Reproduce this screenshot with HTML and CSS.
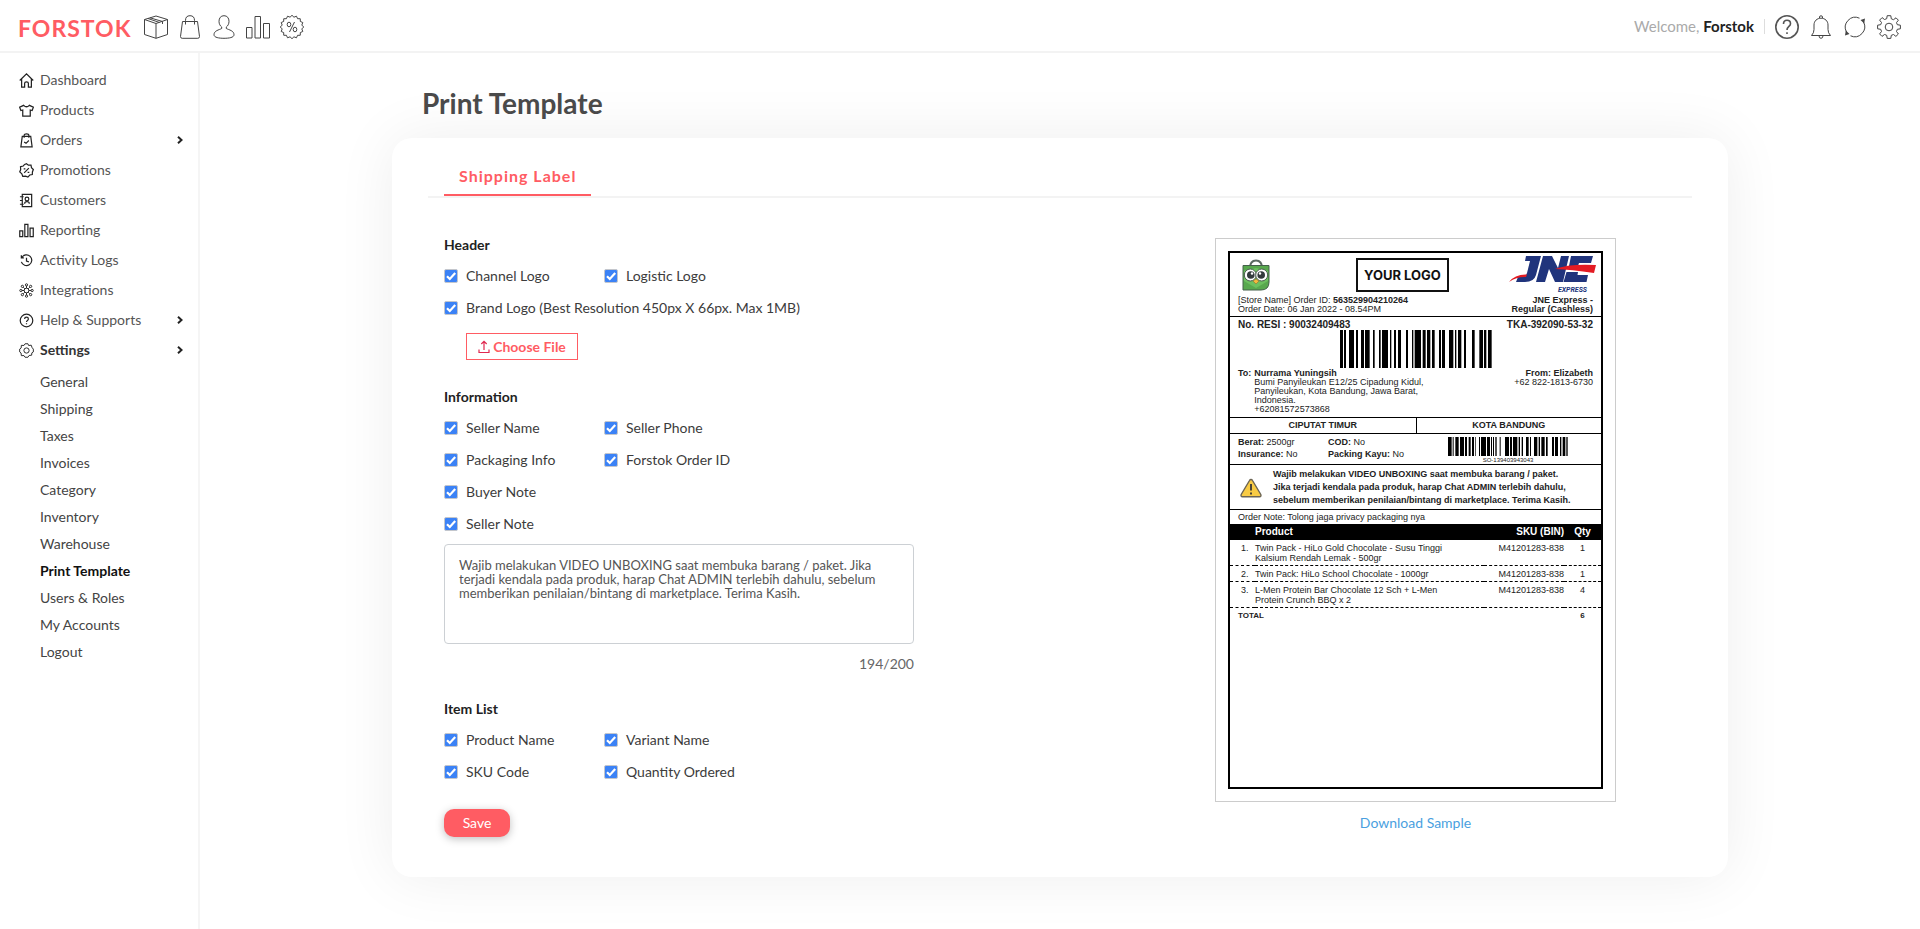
FILE: index.html
```html
<!DOCTYPE html>
<html lang="en">
<head>
<meta charset="utf-8">
<title>Print Template - Forstok</title>
<link rel="stylesheet" href="styles.css">
</head>
<body>
<header class="topbar">
  <a class="brand" href="#">FORSTOK</a>
  <nav class="quick" aria-label="Shortcuts">
    <a href="#" aria-label="Products"><svg viewBox="0 0 24 24"><path d="M12 1L23.500 4.500V19.500L12 23.300L.5 19.500V4.500ZM.5 4.500L12 8.500L23.500 4.500M12 8.500V23.300M6 2.800L18.500 6.500V9M4 3.500L15.500 7.500"/></svg></a>
    <a href="#" aria-label="Orders"><svg viewBox="0 0 24 24"><path d="M4.500 6.500H19.500L21.500 21.500Q21.500 23.300 19.800 23.300H4.200Q2.500 23.300 2.500 21.500ZM7.500 9.500V5.500Q7.500.7 12 .7T16.500 5.500V9.500"/></svg></a>
    <a href="#" aria-label="Customers"><svg viewBox="0 0 24 24"><path d="M12 .7C15.300 .7 17 3.200 17 6.300C17 9 15.800 11 14.300 12V13.500C17 15 22 15.500 22 19.800C22 22.500 17 23.300 12 23.300S2 22.500 2 19.800C2 15.500 7 15 9.700 13.500V12C8.200 11 7 9 7 6.300C7 3.200 8.700 .7 12 .7Z"/></svg></a>
    <a href="#" aria-label="Reporting"><svg viewBox="0 0 24 24"><path d="M.5 12.500H6V23H.5ZM9 1.500H14.500V23H9ZM17.500 8.500H23.500V23H17.500Z"/></svg></a>
    <a href="#" aria-label="Promotions"><svg viewBox="0 0 24 24"><path d="M12 .3L13.950 2.190L16.480 1.190L17.560 3.690L20.270 3.730L20.310 6.440L22.810 7.520L21.810 10.050L23.700 12L21.810 13.950L22.810 16.480L20.310 17.560L20.270 20.270L17.560 20.310L16.480 22.810L13.950 21.810L12 23.700L10.050 21.810L7.520 22.810L6.440 20.310L3.730 20.270L3.690 17.560L1.190 16.480L2.190 13.950L.3 12L2.190 10.050L1.190 7.520L3.690 6.440L3.730 3.730L6.440 3.690L7.520 1.190L10.050 2.190Z"/><path d="M14.500 7L9.500 17"/><ellipse cx="9" cy="9.500" rx="1.800" ry="2.300"/><ellipse cx="15" cy="14.500" rx="1.800" ry="2.300"/></svg></a>
  </nav>
  <p class="welcome">Welcome, <strong>Forstok</strong></p>
  <nav class="tools" aria-label="Account">
    <a href="#" aria-label="Help"><svg viewBox="0 0 24 24"><g class="mid"><circle cx="12" cy="12" r="11.200"/><path d="M8.500 9Q8.500 5.300 12 5.300T15.500 8.700C15.500 11.500 12 11.500 12 15"/></g><path class="mid" d="M12 17.200V19"/></svg></a>
    <a href="#" aria-label="Notifications"><svg viewBox="0 0 24 24"><path d="M10.500 3.200V2Q10.500.8 12 .8T13.500 2V3.200M2.500 20.500Q5 18 5 14.500V10C5 6 8 3.200 12 3.200S19 6 19 10V14.500Q19 18 21.500 20.500ZM10 20.700Q10 23.300 12 23.300T14 20.700"/></svg></a>
    <a href="#" aria-label="Sync"><svg viewBox="0 0 24 24"><path d="M3.500 17A10 10 0 0 1 16.500 3.200M7.500 20.800A10 10 0 0 0 20.500 7"/><path class="solid" d="M2 20.500L6.500 19L2.800 15.500ZM22 3.500L17.500 5L21.200 8.500Z"/></svg></a>
    <a href="#" aria-label="Settings"><svg viewBox="0 0 24 24"><path d="M10.200.7H13.800L14.300 3.800L16.500 4.700L19 2.800L21.400 5.200L19.500 7.600L20.300 9.700L23.400 10.200V13.800L20.300 14.300L19.500 16.500L21.400 19L18.900 21.400L16.500 19.500L14.300 20.300L13.800 23.400H10.200L9.700 20.300L7.500 19.500L5 21.400L2.600 18.900L4.500 16.500L3.700 14.300L.6 13.800V10.200L3.700 9.700L4.500 7.500L2.600 5.100L5.100 2.600L7.500 4.500L9.700 3.700Z"/><circle cx="12" cy="12" r="3.800"/></svg></a>
  </nav>
</header>

<div class="shell">
  <nav class="sidebar" aria-label="Main">
    <ul class="menu">
      <li><a href="#"><svg viewBox="0 0 16 16"><path d="M.8 8L8 1L15.200 8M2.800 6.500V15H6V11Q6 9.500 8 9.500T10 11V15H13.200V6.500"/></svg>Dashboard</a></li>
      <li><a href="#"><svg viewBox="0 0 16 16"><path d="M5 2.500Q8 5.500 11 2.500L15.300 4.500L14 8L12 7.500V14H4V7.500L2 8L.7 4.500Z"/></svg>Products</a></li>
      <li><a href="#"><svg viewBox="0 0 16 16"><path d="M3.500 3.500H12.500L14 14.800H2ZM5.500 5V2.500Q5.500 1 8 1T10.500 2.500V5M5.500 9.500L7.500 11L10.500 8"/></svg>Orders<svg class="chev" viewBox="0 0 8 8"><path d="M2 .8L5.500 4L2 7.200"/></svg></a></li>
      <li><a href="#"><svg viewBox="0 0 16 16"><path d="M8 .8L10 2.300L12.800 2.300L13.300 5L15.300 7L14.300 9.500L14.200 12.300L11.500 12.800L9.500 15L7 14L4 14.200L3 11.500L.8 9.500L1.800 7L1.600 4L4.500 3.200L6 1.500ZM10.500 5.500L5.500 10.500"/><path d="M5 6.200H6.800M9.200 10H11"/></svg>Promotions</a></li>
      <li><a href="#"><svg viewBox="0 0 16 16"><path d="M3.500 1.500H13.500V14.500H3.500ZM1 4H5M1 8H3.500M1 12H5M6 11.500Q6 9.300 8.500 9.300T11 11.500"/><circle cx="8.500" cy="6.500" r="2"/></svg>Customers</a></li>
      <li><a href="#"><svg viewBox="0 0 16 16"><path d="M.8 8.500H4V14.500H.8ZM6.200 1.500H9.500V14.500H6.200ZM11.800 5.500H15.200V14.500H11.800Z"/></svg>Reporting</a></li>
      <li><a href="#"><svg viewBox="0 0 16 16"><path d="M3 4.800A5.700 5.700 0 1 1 2.500 9.500M2.500 2.500V5.200H5.200M8 5V8.500L10.500 9.500"/></svg>Activity Logs</a></li>
      <li><a href="#"><svg viewBox="0 0 16 16"><g class="thin"><circle cx="8" cy="8" r="2.500"/><circle cx="8" cy="2" r="1.200"/><circle cx="8" cy="14" r="1.200"/><circle cx="2" cy="8" r="1.200"/><circle cx="14" cy="8" r="1.200"/><circle cx="3.600" cy="3.600" r="1.200"/><circle cx="12.400" cy="3.600" r="1.200"/><circle cx="3.600" cy="12.400" r="1.200"/><circle cx="12.400" cy="12.400" r="1.200"/><path d="M8 3V5.500M8 10.500V13M3 8H5.500M10.500 8H13M4.500 4.500L6.200 6.200M9.800 9.800L11.500 11.500M11.500 4.500L9.800 6.200M6.200 9.800L4.500 11.500"/></g></svg>Integrations</a></li>
      <li><a href="#"><svg viewBox="0 0 16 16"><circle cx="8" cy="8" r="6.700"/><path d="M6 6.500Q6 4.500 8 4.500T10 6.500C10 8 8 8 8 9.500M8 10.800V12"/></svg>Help &amp; Supports<svg class="chev" viewBox="0 0 8 8"><path d="M2 .8L5.500 4L2 7.200"/></svg></a></li>
      <li><a href="#" class="open"><svg viewBox="0 0 16 16"><g class="thin"><path d="M6.500.8H9.500L10.300 2.700L13 2.300L14 5L15.300 6.500V9.500L13.700 10.500L13.500 13L10.800 13.300L9.500 15.200H6.500L5.300 13.400L2.500 13.500L2.200 10.700L.7 9.500V6.500L2.300 5.300L2.500 2.500L5.300 2.600Z"/><circle cx="8" cy="8" r="2.800"/></g></svg>Settings<svg class="chev" viewBox="0 0 8 8"><path d="M2 .8L5.500 4L2 7.200"/></svg></a>
        <ul class="submenu">
          <li><a href="#">General</a></li>
          <li><a href="#">Shipping</a></li>
          <li><a href="#">Taxes</a></li>
          <li><a href="#">Invoices</a></li>
          <li><a href="#">Category</a></li>
          <li><a href="#">Inventory</a></li>
          <li><a href="#">Warehouse</a></li>
          <li><a href="#" class="current" aria-current="page">Print Template</a></li>
          <li><a href="#">Users &amp; Roles</a></li>
          <li><a href="#">My Accounts</a></li>
          <li><a href="#">Logout</a></li>
        </ul>
      </li>
    </ul>
  </nav>

  <main class="content">
    <h1 class="title">Print Template</h1>
    <section class="card">
      <div class="tabs"><a class="tab" href="#">Shipping Label</a></div>
      <div class="columns">
        <form class="options">
          <fieldset class="group">
            <legend>Header</legend>
            <div class="checks">
              <label><input type="checkbox" checked>Channel Logo</label>
              <label><input type="checkbox" checked>Logistic Logo</label>
              <label class="wide"><input type="checkbox" checked>Brand Logo (Best Resolution 450px X 66px. Max 1MB)</label>
            </div>
            <button type="button" class="choose"><svg viewBox="0 0 12 14"><path d="M1 9.500V12.500H11V9.500M6 10V1.500M3.300 4L6 1.300L8.700 4"/></svg>Choose File</button>
          </fieldset>
          <fieldset class="group">
            <legend>Information</legend>
            <div class="checks">
              <label><input type="checkbox" checked>Seller Name</label>
              <label><input type="checkbox" checked>Seller Phone</label>
              <label><input type="checkbox" checked>Packaging Info</label>
              <label><input type="checkbox" checked>Forstok Order ID</label>
              <label class="wide"><input type="checkbox" checked>Buyer Note</label>
              <label class="wide"><input type="checkbox" checked>Seller Note</label>
            </div>
            <textarea class="note" aria-label="Seller note text">Wajib melakukan VIDEO UNBOXING saat membuka barang / paket. Jika terjadi kendala pada produk, harap Chat ADMIN terlebih dahulu, sebelum memberikan penilaian/bintang di marketplace. Terima Kasih.</textarea>
            <p class="counter">194/200</p>
          </fieldset>
          <fieldset class="group">
            <legend>Item List</legend>
            <div class="checks">
              <label><input type="checkbox" checked>Product Name</label>
              <label><input type="checkbox" checked>Variant Name</label>
              <label><input type="checkbox" checked>SKU Code</label>
              <label><input type="checkbox" checked>Quantity Ordered</label>
            </div>
          </fieldset>
          <button type="submit" class="save">Save</button>
        </form>

        <div class="preview">
          <div class="paper">
            <div class="label">
              <div class="part head">
                <div class="logos">
                  <svg class="toko" viewBox="0 0 28 32"><path d="M8 9Q8 1.500 14 1.500T20 9" fill="none" stroke="#5b6a62" stroke-width="2"/><path d="M1 6.500H27V23Q27 31 19 31H1Z" fill="#58a84e" stroke="#45604a"/><path d="M2 12L14 9L26 12V22L14 29L2 22Z" fill="#6cc05f"/><circle cx="8.300" cy="16" r="6" fill="#fff" stroke="#4c5e50"/><circle cx="19.700" cy="16" r="6" fill="#fff" stroke="#4c5e50"/><circle cx="8.800" cy="16" r="3.800" fill="#333a3d"/><circle cx="19.200" cy="16" r="3.800" fill="#333a3d"/><circle cx="10" cy="14.500" r="1.200" fill="#fff"/><circle cx="18" cy="14.500" r="1.200" fill="#fff"/><path d="M11 22L14 20L17 22L14 25Z" fill="#f5b83d" stroke="#8b7434" stroke-width=".6"/></svg>
                  <span class="yours">YOUR LOGO</span>
                  <svg class="jne" viewBox="0 0 87 37"><path d="M17 0H32L27 19Q25 26 16 26H7L9 21H13Q17 21 18 17L21 5H16Z" fill="#20347c"/><path d="M34 0H43L49 12L52 0H60L54 26H46L40 13L36 26H27Z" fill="#20347c"/><path d="M62 0H84L82 7H70L69 10H60ZM57.500 16H69L68.500 19H79L77.500 26H54.500Z" fill="#20347c"/><path d="M0 26Q6 18 18 18.500L17 21Q8 20.500 0 26ZM46 13Q60 7.500 87 9L85 17Q62 13.500 46 13Z" fill="#e31b23"/><text x="78" y="36" text-anchor="end" class="express">EXPRESS</text></svg>
                </div>
                <div class="split">
                  <p>[Store Name] Order ID: <b>563529904210264</b><br>Order Date: 06 Jan 2022 - 08.54PM</p>
                  <p class="end"><b>JNE Express -<br>Regular (Cashless)</b></p>
                </div>
              </div>
              <div class="part resi">
                <div class="split big"><b>No. RESI : 90032409483</b><b>TKA-392090-53-32</b></div>
                <svg class="code" viewBox="0 0 456 38" preserveAspectRatio="none"><path d="M0 0h9v38h-9zM12 0h6v38h-6zM27 0h15v38h-15zM48 0h6v38h-6zM63 0h9v38h-9zM75 0h14v38h-14zM99 0h5v38h-5zM117 0h5v38h-5zM126 0h18v38h-18zM150 0h4v38h-4zM162 0h6v38h-6zM174 0h9v38h-9zM198 0h6v38h-6zM216 0h4v38h-4zM224 0h19v38h-19zM248 0h9v38h-9zM261 0h10v38h-10zM276 0h8v38h-8zM297 0h6v38h-6zM306 0h9v38h-9zM327 0h13v38h-13zM345 0h4v38h-4zM354 0h10v38h-10zM372 0h6v38h-6zM396 0h8v38h-8zM418 0h11v38h-11zM432 0h7v38h-7zM444 0h11v38h-11z"/></svg>
                <div class="split">
                  <div class="to"><b>To:</b><p><b>Nurrama Yuningsih</b><br>Bumi Panyileukan E12/25 Cipadung Kidul, Panyileukan, Kota Bandung, Jawa Barat, Indonesia.<br>+62081572573868</p></div>
                  <p class="end"><b>From: Elizabeth</b><br>+62 822-1813-6730</p>
                </div>
              </div>
              <div class="cities"><b>CIPUTAT TIMUR</b><b>KOTA BANDUNG</b></div>
              <div class="part facts">
                <p><b>Berat:</b> 2500gr<br><b>Insurance:</b> No</p>
                <p><b>COD:</b> No<br><b>Packing Kayu:</b> No</p>
                <div class="so">
                  <svg viewBox="0 0 360 19" preserveAspectRatio="none"><path d="M0 0h11v19h-11zM14 0h3v19h-3zM22 0h10v19h-10zM36 0h12v19h-12zM51 0h6v19h-6zM62 0h6v19h-6zM72 0h6v19h-6zM82 0h2v19h-2zM93 0h3v19h-3zM99 0h15v19h-15zM117 0h9v19h-9zM129 0h3v19h-3zM135 0h3v19h-3zM142 0h4v19h-4zM155 0h3v19h-3zM171 0h12v19h-12zM186 0h6v19h-6zM195 0h13v19h-13zM212 0h4v19h-4zM221 0h4v19h-4zM234 0h8v19h-8zM246 0h3v19h-3zM258 0h10v19h-10zM272 0h4v19h-4zM280 0h10v19h-10zM294 0h5v19h-5zM312 0h6v19h-6zM321 0h9v19h-9zM336 0h4v19h-4zM344 0h8v19h-8zM355 0h4v19h-4z"/></svg>
                  <span>SO-139403943043</span>
                </div>
              </div>
              <div class="part warning">
                <svg viewBox="0 0 22 20"><path d="M11 1.500Q12 1.500 12.500 2.500L20.800 16.500Q21.500 18.500 19.500 18.700H2.500Q.5 18.500 1.200 16.500L9.500 2.500Q10 1.500 11 1.500Z" fill="#f8cb45" stroke="#6b6454" stroke-width="1.400"/><path d="M11 6V12.500M11 14.500V16.500" stroke="#4a4538" stroke-width="2" fill="none"/></svg>
                <b>Wajib melakukan VIDEO UNBOXING saat membuka barang / paket. Jika terjadi kendala pada produk, harap Chat ADMIN terlebih dahulu, sebelum memberikan penilaian/bintang di marketplace. Terima Kasih.</b>
              </div>
              <p class="order-note">Order Note: Tolong jaga privacy packaging nya</p>
              <table class="items">
                <thead><tr><th class="no"></th><th class="name">Product</th><th class="sku">SKU (BIN)</th><th class="qty">Qty</th></tr></thead>
                <tbody>
                  <tr><td class="no">1.</td><td class="name">Twin Pack - HiLo Gold Chocolate - Susu Tinggi Kalsium Rendah Lemak - 500gr</td><td class="sku">M41201283-838</td><td class="qty">1</td></tr>
                  <tr><td class="no">2.</td><td class="name">Twin Pack: HiLo School Chocolate - 1000gr</td><td class="sku">M41201283-838</td><td class="qty">1</td></tr>
                  <tr><td class="no">3.</td><td class="name">L-Men Protein Bar Chocolate 12 Sch + L-Men Protein Crunch BBQ x 2</td><td class="sku">M41201283-838</td><td class="qty">4</td></tr>
                </tbody>
                <tfoot><tr><th class="total" colspan="3">TOTAL</th><td class="qty">6</td></tr></tfoot>
              </table>
            </div>
          </div>
          <a class="download" href="#">Download Sample</a>
        </div>
      </div>
    </section>
  </main>
</div>
</body>
</html>
```
FILE: styles.css
```css
* { box-sizing: border-box; }
body {
  margin: 0;
  min-height: 100vh;
  display: flex;
  flex-direction: column;
  background: #fff;
  color: #3c3c3c;
  font-family: Lato, "Open Sans", sans-serif;
  font-size: 14px;
  line-height: 20px;
}
a { color: inherit; text-decoration: none; }
p, ul { margin: 0; padding: 0; list-style: none; }
svg { display: block; fill: none; stroke: #444; stroke-width: 1; flex: none; }
b, strong { font-weight: 700; }

.topbar {
  display: flex;
  align-items: center;
  height: 53px;
  padding: 2px 19px 0 18px;
  border-bottom: 2px solid #f3f3f3;
}
.brand {
  margin-right: 13px;
  padding-top: 2px;
  color: #ff5c63;
  font-size: 23px;
  font-weight: 700;
  letter-spacing: 1px;
}
.quick, .tools { display: flex; gap: 10px; }
.quick svg, .tools svg { width: 24px; height: 24px; }
.mid { stroke-width: 1.6; stroke: #555; }
.tools .solid { fill: #444; stroke: none; }
.welcome {
  margin-left: auto;
  margin-right: 10px;
  padding-right: 10px;
  border-right: 1px solid #ddd;
  color: #aaa;
  font-size: 15px;
  line-height: 15px;
}
.welcome strong { color: #222; }

.shell { flex: 1; display: flex; }
.sidebar {
  width: 200px;
  flex: none;
  padding: 12px 14px 0 19px;
  border-right: 2px solid #f5f5f5;
}
.menu > li > a {
  display: flex;
  align-items: center;
  gap: 6px;
  height: 30px;
  color: #555;
}
.menu svg { width: 15px; height: 15px; stroke: #222; stroke-width: 1.3; }
.menu .thin { stroke-width: 1; }
.menu .chev { width: 8px; height: 8px; margin-left: auto; stroke-width: 2; }
.menu .open { color: #333; font-weight: 700; }
.submenu { padding: 3px 0 0 21px; }
.submenu a { display: block; line-height: 27px; color: #444; }
.submenu .current { color: #111; font-weight: 700; }

.content { flex: 1; padding: 34px 20px 52px; }
.title, .card { max-width: 1336px; margin: 0 auto; }
.title {
  padding: 0 30px;
  color: #4a4a4a;
  font-size: 28px;
  font-weight: 700;
  line-height: 32px;
}
.card {
  margin-top: 19px;
  padding: 20px 36px 40px;
  border-radius: 20px;
  background: #fff;
  box-shadow: 0 0 60px rgba(0, 0, 0, 0.07);
}
.tabs { display: flex; padding: 0 16px; border-bottom: 2px solid #f3f3f3; }
.tab {
  padding: 0 15px;
  border-bottom: 2px solid #ff5c63;
  color: #ff5c63;
  font-size: 16px;
  font-weight: 700;
  letter-spacing: 1px;
  line-height: 36px;
}
.columns { display: grid; grid-template-columns: 9fr 7fr; padding-top: 37px; }
.options { max-width: 486px; padding-left: 16px; }
.group { min-width: 0; margin: 0; padding: 0; border: 0; }
.group legend { padding: 0; color: #222; font-weight: 700; line-height: 20px; }
.checks { display: grid; grid-template-columns: 160px 1fr; padding-top: 5px; }
.checks label { display: flex; align-items: center; gap: 8px; height: 32px; }
.checks .wide { grid-column: 1 / -1; }
.checks input {
  appearance: none;
  width: 14px;
  height: 14px;
  margin: 0;
  border: 1px solid #c3c6cc;
  border-radius: 2px;
  background: #3b82f6 url("data:image/svg+xml,%3Csvg xmlns='http://www.w3.org/2000/svg' viewBox='0 0 12 12'%3E%3Cpath d='M2 6.200L4.800 9L10.200 3' fill='none' stroke='white' stroke-width='2.200'/%3E%3C/svg%3E") center / 12px 12px;
}
.choose {
  display: flex;
  align-items: center;
  justify-content: center;
  gap: 3px;
  width: 112px;
  height: 27px;
  margin: 9px 0 27px 22px;
  padding: 0;
  border: 1px solid #ff5c63;
  background: #fff;
  color: #ff5c63;
  font: 700 14px/20px Lato, sans-serif;
}
.choose svg { width: 12px; height: 14px; stroke: #e0284f; stroke-width: 1.2; }
.note {
  display: block;
  width: 100%;
  height: 100px;
  margin-top: 4px;
  padding: 13px 14px;
  border: 1px solid #ccd0d4;
  border-radius: 4px;
  resize: none;
  overflow: hidden;
  color: #555;
  font: 13px/14px Lato, sans-serif;
}
.counter { padding: 10px 0 25px; color: #666; text-align: right; }
.save {
  display: block;
  width: 66px;
  height: 28px;
  margin-top: 21px;
  padding: 0;
  border: 0;
  border-radius: 10px;
  background: #ff5c63;
  box-shadow: 0 2px 8px rgba(0, 0, 0, 0.25);
  color: #fff;
  font: 14px/20px Lato, sans-serif;
}

.preview { display: flex; flex-direction: column; align-items: center; }
.paper { width: 401px; padding: 12px; border: 1px solid #ccc; margin-top: 3px; }
.download { margin-top: 11px; color: #4a9fe0; }
.label {
  min-height: 538px;
  border: 2px solid #000;
  color: #222;
  font: 9px/9px "Liberation Sans", Arial, sans-serif;
}
.part { padding: 0 8px; border-bottom: 1px solid #000; }
.split { display: flex; justify-content: space-between; }
.end { text-align: right; }
.head { padding-top: 3px; padding-bottom: 2px; }
.logos { display: flex; align-items: center; margin-right: -3px; padding: 0 0 3px 4px; }
.logos svg { stroke: none; }
.toko { width: 28px; height: 32px; }
.yours {
  margin: 0 auto 0 86px;
  padding: 0 6px;
  border: 2px solid #111;
  color: #111;
  font: 700 13px/30px Inter, sans-serif;
}
.jne { width: 87px; height: 37px; }
.express { fill: #20347c; font: italic 700 7px Roboto, sans-serif; }
.resi { padding-top: 2px; padding-bottom: 3px; }
.big { font-size: 10px; line-height: 11px; }
.code { width: 152px; height: 38px; margin: 0 auto 1px; stroke: none; fill: #000; }
.to { display: flex; gap: 3px; }
.to p { width: 180px; }
.cities {
  display: grid;
  grid-template-columns: 1fr 1fr;
  border-bottom: 1px solid #000;
  line-height: 15px;
  text-align: center;
}
.cities b + b { border-left: 1px solid #000; }
.facts { display: grid; grid-template-columns: 90px 1fr 120px; padding: 2px 33px 1px 8px; line-height: 12px; }
.so { padding-top: 1px; text-align: center; font-size: 6px; line-height: 6px; }
.so svg { width: 120px; height: 19px; margin-bottom: 1px; stroke: none; fill: #000; }
.so span { display: block; }
.warning {
  display: flex;
  align-items: center;
  gap: 11px;
  padding: 3px 30px 2px 10px;
  line-height: 13px;
}
.warning svg { width: 22px; height: 20px; }
.order-note { padding: 0 8px; line-height: 14px; }
.items { width: 100%; border-collapse: collapse; }
.items th, .items td { padding: 3px 0 2px; vertical-align: top; font-weight: 400; line-height: 10px; text-align: left; }
.items thead th { padding-bottom: 3px; background: #000; color: #fff; font-size: 10px; font-weight: 700; }
.items tbody tr { border-bottom: 1px dashed #000; }
.items .no { width: 25px; padding-left: 11px; }
.items .name { padding-right: 20px; }
.items .sku { width: 80px; text-align: right; }
.items .qty { width: 37px; text-align: center; }
.items tfoot th, .items tfoot td { font-size: 8px; font-weight: 700; }
.items .total { padding-left: 8px; }
```
